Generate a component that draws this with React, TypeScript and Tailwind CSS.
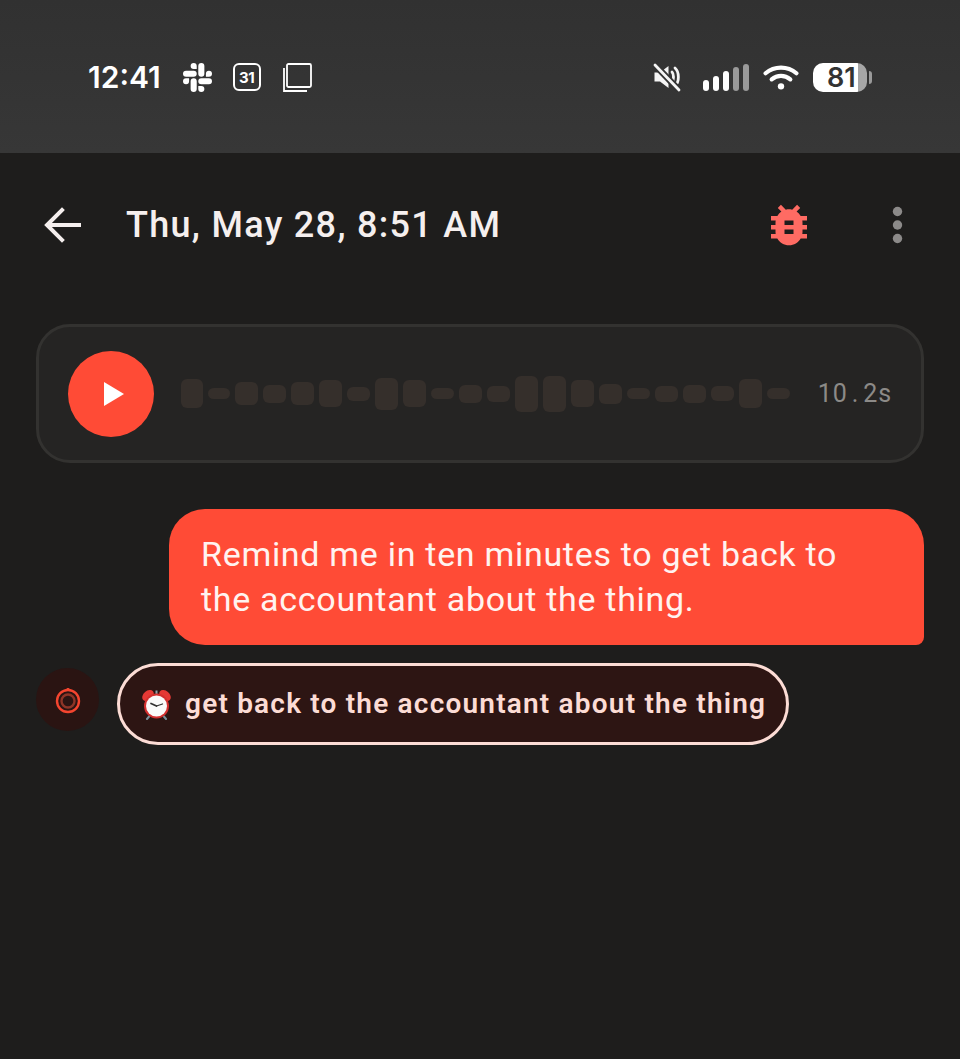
import { SiSlack } from 'react-icons/si';
import { MdBugReport } from 'react-icons/md';

const bars = [29, 11, 23, 18, 23, 27, 14, 32, 27, 11, 18, 16, 36, 36, 27, 20, 11, 16, 18, 15, 29, 11];

function MuteIcon() {
  return (
    <svg width="30" height="30" viewBox="0 0 30 30" fill="none">
      <path d="M2.500 10.500h5.500l8.500-6.500v22l-8.500-6.500H2.500z" fill="#f5f5f5" />
      <path d="M20 10c2 2 2 8 0 10M23 6c4.500 4 4.500 14 0 18" stroke="#f5f5f5" strokeWidth="2.800" strokeLinecap="round" />
      <path d="M3 3l24 25" stroke="#343434" strokeWidth="6.500" />
      <path d="M3 3l24 25" stroke="#f5f5f5" strokeWidth="2.800" strokeLinecap="round" />
    </svg>
  );
}

function WifiIcon() {
  return (
    <svg width="36" height="28" viewBox="0 0 38 30" fill="none" stroke="#fff" strokeWidth="4.500" strokeLinecap="round">
      <path d="M2.500 11C12 3 26 3 35.500 11" />
      <path d="M9 17.500c6-5 14-5 20 0" />
      <circle cx="19" cy="25" r="3.400" fill="#fff" stroke="none" />
    </svg>
  );
}

function SignalBars() {
  return (
    <div className="flex items-end gap-[4px] h-[27px]">
      <div className="w-[6px] h-[11px] rounded-full bg-white" />
      <div className="w-[6px] h-[15px] rounded-full bg-white" />
      <div className="w-[6px] h-[20px] rounded-full bg-white" />
      <div className="w-[6px] h-[24px] rounded-full bg-[#9a9a9a]" />
      <div className="w-[6px] h-[27px] rounded-full bg-[#9a9a9a]" />
    </div>
  );
}

function Battery() {
  return (
    <div className="flex items-center gap-[2px]">
      <div className="w-[54px] h-[29px] rounded-[10px] bg-[linear-gradient(90deg,#fff_45px,#a6a6a6_45px)] flex items-center pl-[14px]">
        <span className="text-[27px] leading-none font-semibold text-[#333] font-['Inter',sans-serif]">81</span>
      </div>
      <div className="w-[3px] h-[13px] rounded-r-full bg-[#9a9a9a]" />
    </div>
  );
}

function AlarmEmoji() {
  return (
    <svg width="31" height="31" viewBox="0 0 31 31">
      <path d="M8.500 27l-2.500 3M22.500 27l2.500 3" stroke="#78909c" strokeWidth="2" strokeLinecap="round" />
      <ellipse cx="7" cy="6.500" rx="6.500" ry="4.500" transform="rotate(-40 7 6.500)" fill="#e53935" />
      <ellipse cx="24" cy="6.500" rx="6.500" ry="4.500" transform="rotate(40 24 6.500)" fill="#e53935" />
      <rect x="14.500" y="1.500" width="2" height="5" fill="#90a4ae" />
      <circle cx="15.500" cy="17" r="12.500" fill="#d32f2f" />
      <circle cx="15.500" cy="17" r="10.500" fill="#fafafa" />
      <path d="M15.500 17l-5.500-2.500" stroke="#333" strokeWidth="1.700" strokeLinecap="round" />
      <path d="M15.500 17l6-2" stroke="#333" strokeWidth="1.300" strokeLinecap="round" />
    </svg>
  );
}

export default function App() {
  return (
    <div className="min-h-[1059px] bg-[#1e1d1c] font-['Roboto',sans-serif] flex flex-col">
      {/* status bar */}
      <div className="h-[153px] bg-gradient-to-b from-[#313131] to-[#373737] flex items-start justify-between pt-[60px] pl-[88px] pr-[88px]">
        <div className="flex items-center h-[34px]">
          <span className="text-[30px] leading-none font-semibold text-white font-['Inter',sans-serif]">12:41</span>
          <SiSlack className="ml-[22px] text-white w-[29px] h-[29px]" />
          <div className="ml-[21px] w-[28px] h-[28px] rounded-[6px] border-[2.500px] border-white flex items-center justify-center">
            <span className="text-[15px] leading-none font-bold text-white font-['Inter',sans-serif] tracking-[-0.5px]">31</span>
          </div>
          <svg className="ml-[22px]" width="29" height="29" viewBox="0 0 29 29" fill="none" stroke="#fff" strokeWidth="1.800">
            <rect x="4" y="1" width="24" height="23" rx="1.500" />
            <path d="M1 5v23h23" />
          </svg>
        </div>
        <div className="flex items-center h-[34px]">
          <MuteIcon />
          <div className="ml-[21px]"><SignalBars /></div>
          <div className="ml-[14px]"><WifiIcon /></div>
          <div className="ml-[14px]"><Battery /></div>
        </div>
      </div>

      {/* header */}
      <div className="h-[144px] flex items-center pl-[44px] pr-[56px]">
        <svg width="38" height="36" viewBox="0 0 38 36" fill="none" stroke="#f5efee" strokeWidth="4" strokeLinecap="square">
          <path d="M35 18H4M18 3L3 18l15 15" />
        </svg>
        <h1 className="ml-[44px] text-[36px] leading-none font-medium text-[#f5efee] tracking-[1.300px]">Thu, May 28, 8:51 AM</h1>
        <MdBugReport className="ml-auto text-[#ff6b63] w-[54px] h-[54px]" />
        <svg className="ml-[75px]" width="13" height="38" viewBox="0 0 13 38" fill="#8c8a89">
          <circle cx="6.500" cy="5.500" r="4.700" />
          <circle cx="6.500" cy="19" r="4.700" />
          <circle cx="6.500" cy="32.500" r="4.700" />
        </svg>
      </div>

      {/* audio card */}
      <div className="mt-[27px] mx-[36px] h-[139px] rounded-[34px] border-[3px] border-[#333230] bg-[#252423] flex items-center pl-[29px] pr-[29px]">
        <button className="w-[86px] h-[86px] rounded-full bg-[#ff4b36] flex items-center justify-center shrink-0">
          <svg width="20" height="24" viewBox="0 0 20 24" className="ml-[5px]">
            <path d="M0 0l20 12L0 24z" fill="#fff" />
          </svg>
        </button>
        <div className="ml-[27px] flex items-center gap-[5px]">
          {bars.map((h, i) => (
            <div key={i} className={i < 2 ? 'w-[22px] rounded-[6px] bg-[#352f2b]' : 'w-[23px] rounded-[6px] bg-[#352f2b]'} style={{ height: h }} />
          ))}
        </div>
        <span className="ml-auto text-[25px] leading-none text-[#8c8a87] tracking-[0.900px]">10<span className="mx-[4px]">.</span>2s</span>
      </div>

      {/* user message */}
      <div className="mt-[46px] flex justify-end pr-[36px]">
        <div className="w-[755px] h-[136px] bg-[#ff4b36] rounded-[36px] rounded-br-[8px] pl-[32px] pt-[23px] text-[34px] leading-[45px] text-[#fff3f0] tracking-[0.7px]">
          Remind me in ten minutes to get back to<br />the accountant about the thing.
        </div>
      </div>

      {/* reminder chip */}
      <div className="mt-[18px] pl-[36px] flex items-start">
        <div className="mt-[5px] w-[63px] h-[63px] rounded-full bg-[#2a1412] flex items-center justify-center">
          <svg width="26" height="28" viewBox="0 0 26 28" fill="none">
            <circle cx="13" cy="15" r="11" stroke="#f4452f" strokeWidth="2.400" />
            <circle cx="13" cy="15" r="6.500" stroke="#8e3527" strokeWidth="2.400" />
            <rect x="11.500" y="2" width="3" height="2.500" rx="1" fill="#f4452f" />
          </svg>
        </div>
        <div className="ml-[18px] h-[82px] w-[672px] rounded-full border-[3px] border-[#fcdcd5] bg-[#2d1513] flex items-center pl-[21px]">
          <AlarmEmoji />
          <span className="ml-[13px] text-[28px] leading-none font-semibold text-[#fcdcd5] tracking-[1.200px]">get back to the accountant about the thing</span>
        </div>
      </div>
    </div>
  );
}
